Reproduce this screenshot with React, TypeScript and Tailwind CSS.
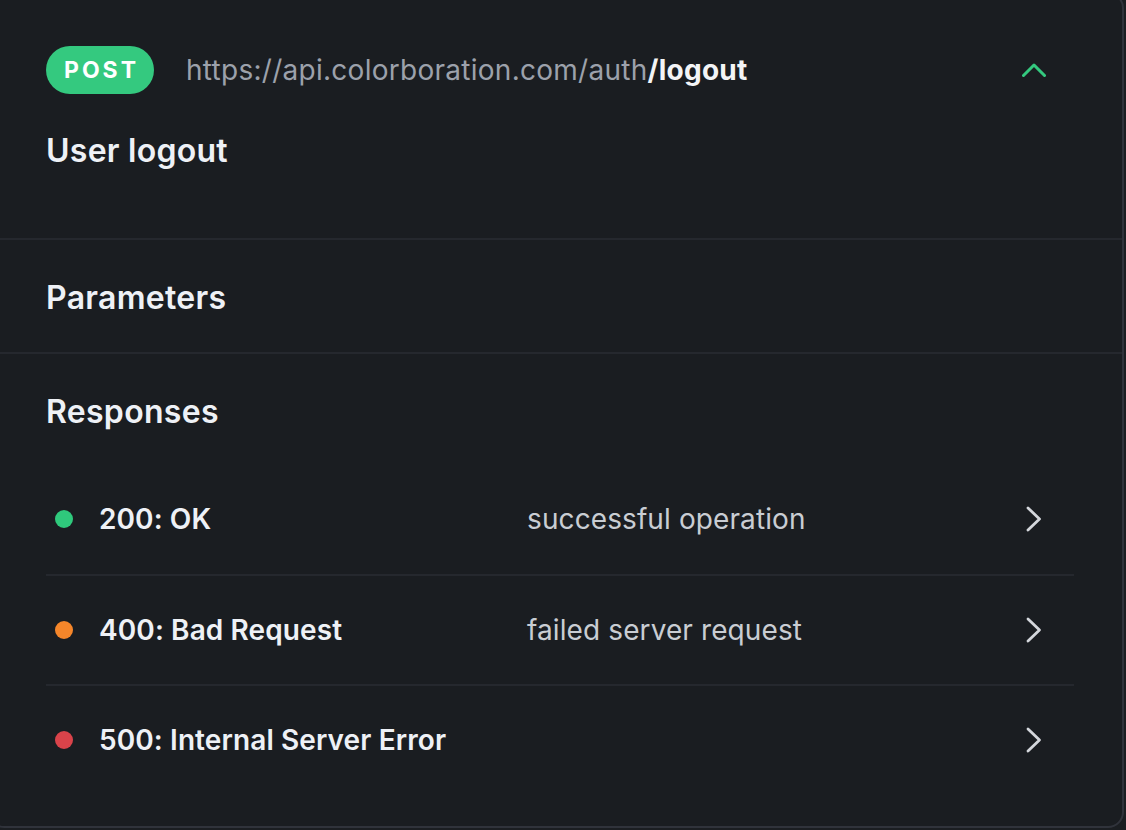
import React from "react";

const ChevronUp = () => (
  <svg width="24" height="16" viewBox="0 0 24 16" fill="none">
    <polyline points="1.5,13.5 12,3 22.5,13.5" stroke="#34c97f" strokeWidth="3" strokeLinecap="round" strokeLinejoin="round" />
  </svg>
);

const ChevronRight = () => (
  <svg width="24" height="28" viewBox="0 0 24 28" fill="none">
    <polyline points="6,3 17.5,14 6,25" stroke="#d4d7dc" strokeWidth="2.8" strokeLinecap="round" strokeLinejoin="round" />
  </svg>
);

const rows = [
  { code: "200: OK", desc: "successful operation", dot: "bg-[#2fc97c]" },
  { code: "400: Bad Request", desc: "failed server request", dot: "bg-[#f5862a]" },
  { code: "500: Internal Server Error", desc: "", dot: "bg-[#d9434a]" },
];

export default function App() {
  return (
    <div
      className="w-[1126px] h-[830px] overflow-hidden bg-[#1b1e22]"
      style={{ fontFamily: "Inter, 'Noto Sans', sans-serif" }}
    >
      <div className="ml-[-12px] mt-[-8px] w-[1136px] rounded-2xl border-2 border-[#30333b] bg-[#1a1d21]">
        {/* Header */}
        <div className="pl-[56px] pr-[48px] pt-[52px] pb-[67px]">
          <div className="flex items-center pr-[28px]">
            <div className="h-[48px] w-[108px] rounded-full bg-[#34c97f] flex items-center justify-center">
              <span className="text-[23px] font-bold tracking-[0.13em] text-white pl-[3px]">POST</span>
            </div>
            <div className="ml-[32px] text-[28px] leading-[40px] tracking-[0.27px] text-[#9ca1ab]">
              https://api.colorboration.com/auth
              <span className="font-bold text-[#f3f4f6]">/logout</span>
            </div>
            <div className="ml-auto flex items-center">
              <ChevronUp />
            </div>
          </div>
          <div className="mt-[37px] text-[32px] leading-[40px] tracking-[0.25px] font-semibold text-[#eef1f6]">User logout</div>
        </div>

        {/* Parameters */}
        <div className="border-t-2 border-[#25282e] pl-[56px] pr-[48px] pt-[38px] pb-[34px]">
          <div className="text-[32px] leading-[40px] tracking-[0.3px] font-semibold text-[#eef1f6]">Parameters</div>
        </div>

        {/* Responses */}
        <div className="border-t-2 border-[#25282e] pl-[56px] pr-[48px] pt-[38px] pb-[32px]">
          <div className="text-[32px] leading-[40px] tracking-[0.3px] font-semibold text-[#eef1f6]">Responses</div>
          <div className="mt-[32px]">
            {rows.map((r, i) => (
              <div
                key={r.code}
                className={`h-[110px] flex items-center pl-[9px] pr-[28px] ${i > 0 ? "border-t-2 border-[#25282e]" : ""}`}
              >
                <div className={`h-[18px] w-[18px] rounded-full ${r.dot}`} />
                <div className="ml-[26px] w-[428px] text-[28px] tracking-[0.1px] font-semibold text-[#eef1f6]">{r.code}</div>
                <div className="text-[28px] tracking-[0.1px] text-[#c9cdd3]">{r.desc}</div>
                <div className="ml-auto flex items-center">
                  <ChevronRight />
                </div>
              </div>
            ))}
          </div>
        </div>
      </div>
    </div>
  );
}
